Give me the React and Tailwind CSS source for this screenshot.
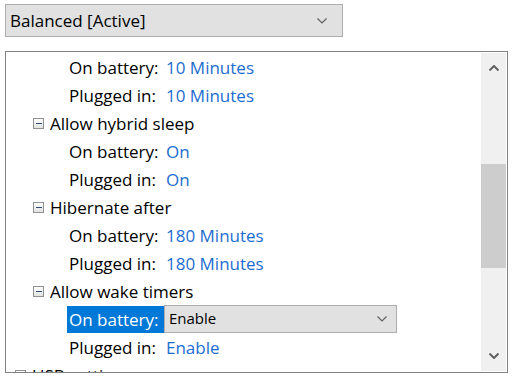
import React from "react";

const font = "font-['Open_Sans','Noto_Sans','Liberation_Sans',sans-serif]";

const Chevron = ({ className = "", stroke = "#606060", w = 10, h = 6, sw = 1.2 }) => (
  <svg width={w} height={h} viewBox="0 0 10 6" className={className}>
    <path d="M0.5 0.5 L5 5 L9.5 0.5" fill="none" stroke={stroke} strokeWidth={sw} />
  </svg>
);

const MinusBox = () => (
  <span className="w-[11px] h-[11px] border border-[#919191] bg-gradient-to-b from-white to-[#e2e2e2] flex items-center justify-center flex-shrink-0">
    <span className="w-[6px] h-[1px] bg-[#2d4b7a]" />
  </span>
);

const rows = [
  { type: "set", label: "On battery:", value: "10 Minutes" },
  { type: "set", label: "Plugged in:", value: "10 Minutes" },
  { type: "cat", label: "Allow hybrid sleep" },
  { type: "set", label: "On battery:", value: "On" },
  { type: "set", label: "Plugged in:", value: "On" },
  { type: "cat", label: "Hibernate after" },
  { type: "set", label: "On battery:", value: "180 Minutes" },
  { type: "set", label: "Plugged in:", value: "180 Minutes" },
  { type: "cat", label: "Allow wake timers" },
  { type: "edit", label: "On battery:", value: "Enable" },
  { type: "set", label: "Plugged in:", value: "Enable" },
  { type: "top", label: "USB settings" },
];

function Row({ r }) {
  if (r.type === "cat" || r.type === "top") {
    return (
      <div className={`h-[28px] flex items-center gap-[6px] ${r.type === "top" ? "pl-[9px]" : "pl-[27px]"}`}>
        <MinusBox />
        <span className="text-black">{r.label}</span>
      </div>
    );
  }
  if (r.type === "edit") {
    return (
      <div className="h-[28px] flex items-center pl-[61px]">
        <span className="w-[97px] h-[27px] pl-[2px] flex items-center bg-[#0078d7] text-white">{r.label}</span>
        <div className="w-[233px] h-[28px] -mt-[1px] border border-[#adadad] bg-[#e1e1e1] flex items-center justify-between pl-[4px] pr-[9px] text-[15px]">
          <span className="text-black">{r.value}</span>
          <Chevron />
        </div>
      </div>
    );
  }
  return (
    <div className="h-[28px] flex items-center pl-[63px]">
      <span className="w-[97px] text-black">{r.label}</span>
      <span className="text-[#1c6dd0]">{r.value}</span>
    </div>
  );
}

export default function App() {
  return (
    <div className={`w-[519px] h-[378px] bg-white overflow-hidden text-[17px] ${font}`}>
      <div className="pt-[4px] pl-[5px]">
        <div className="w-[338px] h-[33px] border border-[#adadad] bg-[#e1e1e1] flex items-center justify-between pl-[4px] pr-[15px]">
          <span className="text-black">Balanced [Active]</span>
          <Chevron />
        </div>
      </div>

      <div className="mt-[14px] ml-[5px] w-[503px] h-[322px] border border-[#828282] flex overflow-hidden">
        <div className="flex-1 pt-[1px] leading-none">
          {rows.map((r, i) => (
            <Row key={i} r={r} />
          ))}
        </div>

        <div className="w-[25px] my-[1px] mr-[1px] bg-[#f0f0f0] flex flex-col">
          <div className="h-[30px] flex items-center justify-center">
            <Chevron className="rotate-180" stroke="#606060" w={10} h={6} sw={2} />
          </div>
          <div className="h-[81px]" />
          <div className="h-[104px] bg-[#cdcdcd]" />
          <div className="flex-1" />
          <div className="h-[30px] flex items-center justify-center">
            <Chevron stroke="#606060" w={10} h={6} sw={2} />
          </div>
        </div>
      </div>
    </div>
  );
}
